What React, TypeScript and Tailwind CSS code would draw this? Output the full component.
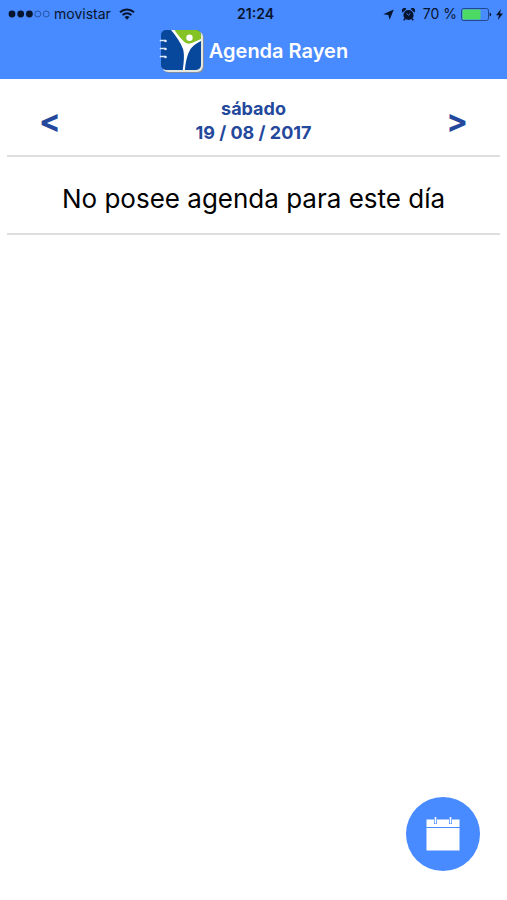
import React from "react";

function SignalDots() {
  return (
    <svg width="42" height="10" viewBox="0 0 42 10" aria-hidden="true">
      <circle cx="4" cy="5" r="3.4" fill="#07142e" />
      <circle cx="12.7" cy="5" r="3.4" fill="#07142e" />
      <circle cx="21.4" cy="5" r="3.4" fill="#07142e" />
      <circle cx="29.8" cy="5" r="3" fill="none" stroke="#1f4791" strokeWidth="0.8" />
      <circle cx="38.2" cy="5" r="3" fill="none" stroke="#1f4791" strokeWidth="0.8" />
    </svg>
  );
}

function WifiIcon() {
  return (
    <svg width="16" height="12" viewBox="0 0 16 12" fill="none" stroke="#07142e" strokeWidth="2" aria-hidden="true">
      <path d="M1 4.2a10.2 10.2 0 0 1 14 0" />
      <path d="M3.6 7.1a6.3 6.3 0 0 1 8.8 0" />
      <path d="M8 11.7L5.5 9.1a3.7 3.7 0 0 1 5 0z" fill="#07142e" stroke="none" />
    </svg>
  );
}

function LocationIcon() {
  return (
    <svg width="11" height="11" viewBox="0 0 11 11" aria-hidden="true">
      <path d="M10.8 0.4L6.6 10.8L5.4 5.9L0.3 5.2z" fill="#07142e" />
    </svg>
  );
}

function AlarmIcon() {
  return (
    <svg width="13" height="13" viewBox="0 0 13 13" aria-hidden="true">
      <circle cx="6.5" cy="7" r="5.1" fill="#07142e" />
      <path d="M0.5 4.6A2.6 2.6 0 0 1 4.4 0.9zM12.5 4.6A2.6 2.6 0 0 0 8.600 0.9z" fill="#07142e" />
      <path d="M3 10.500L1.800 12.400M10 10.500l1.200 1.900" stroke="#07142e" strokeWidth="1.500" />
      <path d="M4.600 5.400L6.500 7.200L8.400 5.400" fill="none" stroke="#488aff" strokeWidth="0.900" />
    </svg>
  );
}

function BatteryIcon() {
  return (
    <svg width="31" height="13" viewBox="0 0 31 13" aria-hidden="true">
      <rect x="0.5" y="0.5" width="27" height="12" rx="2" fill="none" stroke="#1d3f80" strokeWidth="0.9" />
      <rect x="1.5" y="1.5" width="18" height="10" rx="1" fill="#4cd964" />
      <path d="M28.6 4.4a2.2 2.2 0 0 1 0 4.2z" fill="#07142e" />
    </svg>
  );
}

function BoltIcon() {
  return (
    <svg width="7" height="11" viewBox="0 0 7 11" aria-hidden="true">
      <path d="M5 0L0 6.300H2.900L1.900 11L7 4.500H4z" fill="#07142e" />
    </svg>
  );
}

function RayenLogo() {
  return (
    <svg width="46" height="46" viewBox="0 0 46 46" aria-hidden="true">
      <defs>
        <clipPath id="cover">
          <rect x="2" y="2" width="40" height="40" rx="5" />
        </clipPath>
      </defs>
      <rect x="4" y="4" width="41" height="41" rx="6" fill="#7d8da6" />
      <rect x="3" y="3" width="41" height="41" rx="6" fill="#e4e6e0" />
      <g clipPath="url(#cover)">
        <rect x="2" y="2" width="40" height="40" fill="#07479c" />
        <path d="M13 1H43V12L30 20L25 19Z" fill="#84c225" />
        <path d="M15 1C18 6 22 11 26 14.500C28 16 31 16 34 14.500L43 10.500V12.500C38 15 33.500 18 31.500 21C28 27 26.500 34 25.800 43H23.600C25 34 25.500 26 24 21C21.500 14 17 8 12 2Z" fill="#fff" />
        <circle cx="30.500" cy="9.800" r="3.200" fill="#fff" />
      </g>
      <g fill="none" stroke="#dce8fc" strokeWidth="1.700" strokeLinecap="round">
        <path d="M1.500 12.500H6" />
        <path d="M1.500 20.500H6" />
        <path d="M1.500 28.500H6" />
      </g>
      <g fill="#dce8fc">
        <circle cx="6.500" cy="13" r="1.300" />
        <circle cx="6.500" cy="21" r="1.300" />
        <circle cx="6.500" cy="29" r="1.300" />
      </g>
    </svg>
  );
}

function CalendarIcon() {
  return (
    <svg width="34" height="34" viewBox="0 0 34 34" aria-hidden="true">
      <path d="M0.500 2.500H33.500V33.500H0.500z" fill="#fff" />
      <path d="M0 10.500H34" stroke="#488aff" strokeWidth="1.200" />
      <path d="M9.500 2V7M24.500 2V7" stroke="#488aff" strokeWidth="3" />
      <path d="M9.500 0V6.500M24.500 0V6.500" stroke="#fff" strokeWidth="1.600" />
    </svg>
  );
}

export default function App() {
  return (
    <div className="flex min-h-screen flex-col bg-white font-['Inter','Liberation_Sans',sans-serif]">
      <header className="bg-[#488aff] pb-[5px]">
        <div className="grid h-7 grid-cols-[1fr_auto_1fr] items-center pr-1 pl-2 text-sm text-[#07142e]">
          <div className="flex items-center gap-1">
            <SignalDots />
            <span>movistar</span>
            <span className="pl-1">
              <WifiIcon />
            </span>
          </div>
          <time className="font-semibold">21:24</time>
          <div className="flex items-center justify-end gap-1">
            <LocationIcon />
            <span className="px-1">
              <AlarmIcon />
            </span>
            <span>70 %</span>
            <BatteryIcon />
            <BoltIcon />
          </div>
        </div>
        <div className="flex items-center justify-center gap-1">
          <RayenLogo />
          <h1 className="text-xl font-semibold text-white">Agenda Rayen</h1>
        </div>
      </header>

      <main className="mx-[7px] flex-1">
        <section className="flex h-[78px] items-center justify-between border-b-2 border-[#dedede] px-7 pt-2 text-[#24489b]">
          <button type="button" aria-label="Día anterior" className="px-1 text-[32px] leading-10 font-bold">
            &lt;
          </button>
          <div className="text-center text-lg leading-6 font-bold">
            <p>sábado</p>
            <p>19 / 08 / 2017</p>
          </div>
          <button type="button" aria-label="Día siguiente" className="px-1 text-[32px] leading-10 font-bold">
            &gt;
          </button>
        </section>
        <p className="flex h-[78px] items-center justify-center border-b-2 border-[#dedede] pt-1.5 text-[26px] text-black">
          No posee agenda para este día
        </p>
      </main>

      <button
        type="button"
        aria-label="Abrir calendario"
        className="fixed right-[27px] bottom-[29px] flex size-[74px] items-center justify-center rounded-full bg-[#488aff]"
      >
        <CalendarIcon />
      </button>
    </div>
  );
}
